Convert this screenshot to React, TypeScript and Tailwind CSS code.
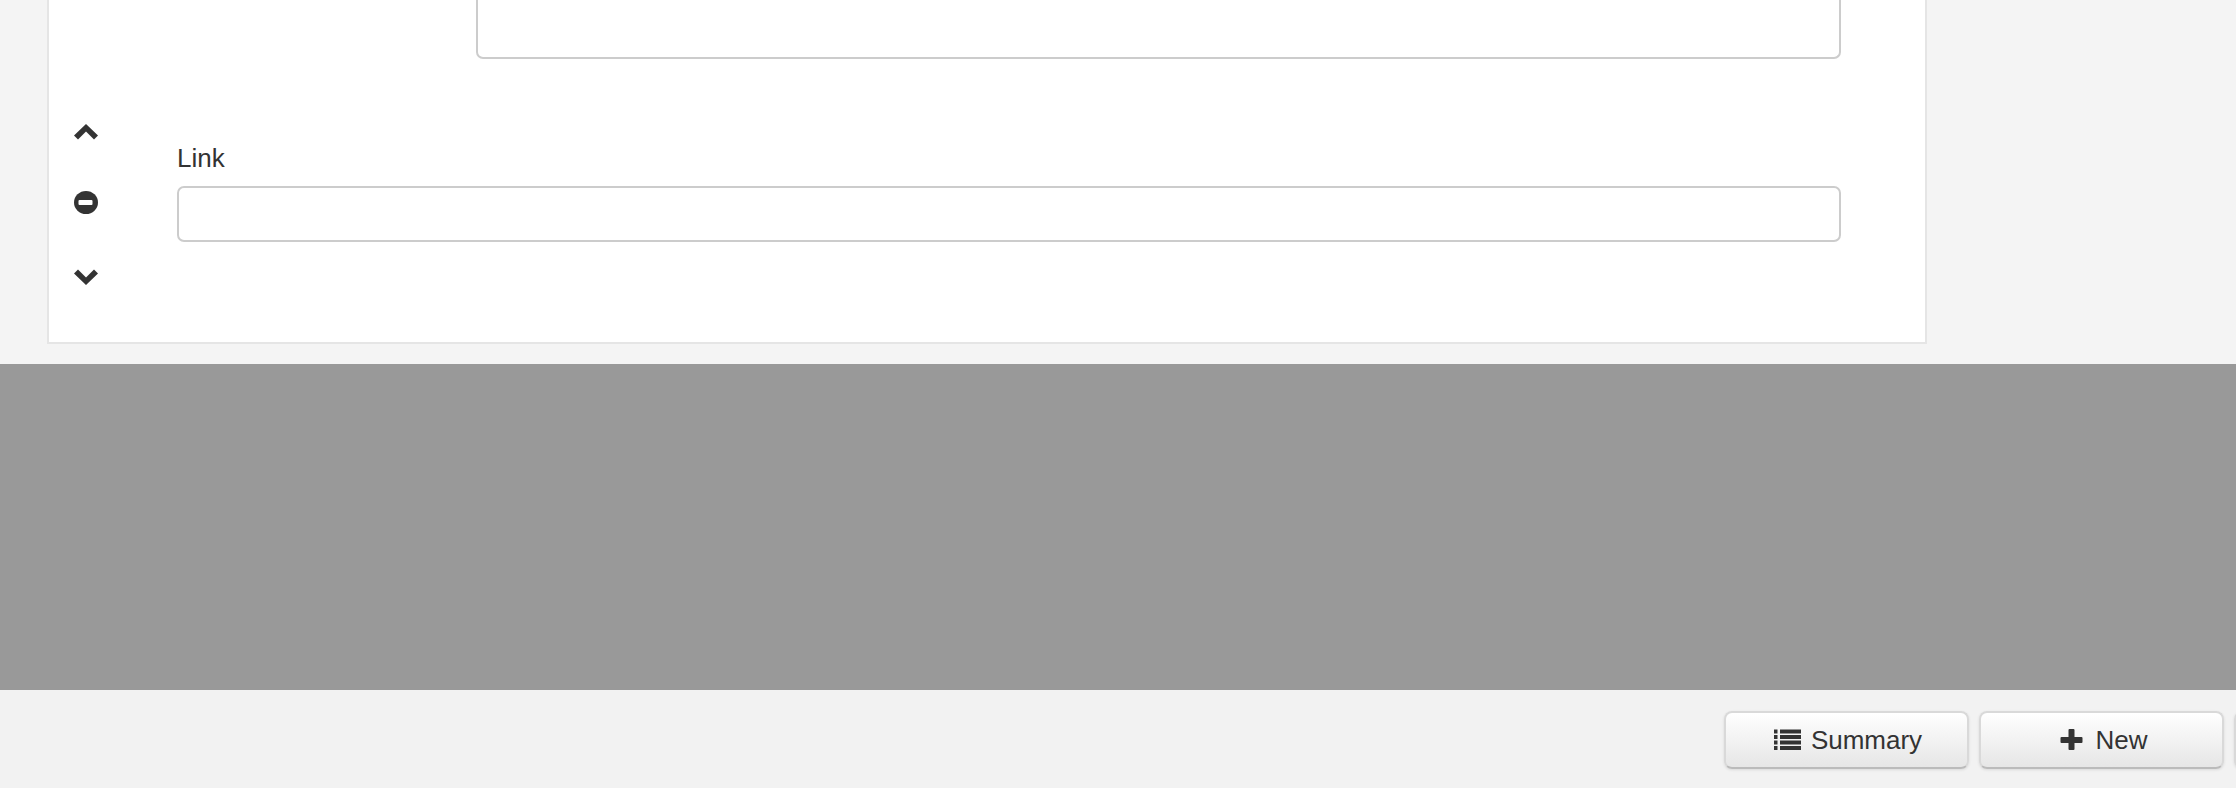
import { ReactNode } from 'react'

function ChevronUp() {
  return (
    <svg width="24" height="16" viewBox="0 0 24 16" className="block text-[#333]">
      <path d="M0 11.5 L12 0 L24 11.5 L20 15.5 L12 7.5 L4 15.5 Z" fill="currentColor" />
    </svg>
  )
}

function ChevronDown() {
  return (
    <svg width="24" height="16" viewBox="0 0 24 16" className="block text-[#333]">
      <path d="M0 4.5 L12 16 L24 4.5 L20 .5 L12 8.5 L4 .5 Z" fill="currentColor" />
    </svg>
  )
}

function MinusCircle() {
  return (
    <svg width="24" height="23" viewBox="0 0 24 23" className="block text-[#333]">
      <ellipse cx="12" cy="11.5" rx="12" ry="11.5" fill="currentColor" />
      <rect x="4.5" y="9" width="14" height="5" rx="1" fill="#fff" />
    </svg>
  )
}

function ListIcon() {
  return (
    <svg width="27" height="22" viewBox="0 0 27 22" className="block text-[#333]">
      <g fill="currentColor">
        <rect x="0" y="0.5" width="3.5" height="4" />
        <rect x="6" y="0.5" width="21" height="4" />
        <rect x="0" y="6" width="3.5" height="4" />
        <rect x="6" y="6" width="21" height="4" />
        <rect x="0" y="11.5" width="3.5" height="4" />
        <rect x="6" y="11.5" width="21" height="4" />
        <rect x="0" y="17" width="3.5" height="4" />
        <rect x="6" y="17" width="21" height="4" />
      </g>
    </svg>
  )
}

function PlusIcon() {
  return (
    <svg width="27" height="22" viewBox="0 0 27 22" className="block text-[#333]">
      <path
        d="M10.5 1 Q10.5 0 11.5 0 H15.5 Q16.5 0 16.5 1 V8 H23.5 Q24.5 8 24.5 9 V13 Q24.5 14 23.5 14 H16.5 V20 Q16.5 21 15.5 21 H11.5 Q10.5 21 10.5 20 V14 H3.5 Q2.5 14 2.5 13 V9 Q2.5 8 3.5 8 H10.5 Z"
        fill="currentColor"
      />
    </svg>
  )
}

function ToolbarButton({ icon, label }: { icon?: ReactNode; label?: string }) {
  return (
    <button className="flex h-[58px] w-[245px] flex-none items-center justify-center gap-[10px] rounded-[8px] border-2 border-[#d9d9d9] border-b-[#bbbbbb] bg-gradient-to-b from-white to-[#e6e6e6] pl-[3px] text-[26px] text-[#333] shadow-[0_1px_3px_rgba(0,0,0,0.1)]">
      {icon}
      {label && <span>{label}</span>}
    </button>
  )
}

export default function App() {
  return (
    <div className="flex h-[788px] w-[2236px] flex-col overflow-hidden bg-[#f2f2f2] font-['Liberation_Sans',Arial,sans-serif]">
      <div className="h-[364px] flex-none bg-[#f4f4f4] pl-[47px]">
        <div className="h-[344px] w-[1880px] border-2 border-t-0 border-[#e5e5e5] bg-white">
          <div className="ml-[427px] h-[59px] w-[1365px] rounded-b-[7px] border-2 border-t-0 border-[#cccccc] bg-white" />

          <div className="mt-[65px] flex">
            <div className="flex w-[128px] flex-none flex-col pl-[25px]">
              <ChevronUp />
              <div className="mt-[51px]">
                <MinusCircle />
              </div>
              <div className="mt-[55px]">
                <ChevronDown />
              </div>
            </div>
            <div className="pt-[16px]">
              <label className="block h-[46px] text-[26px] leading-[36px] text-[#333]">Link</label>
              <input
                type="text"
                className="block h-[56px] w-[1664px] rounded-[7px] border-2 border-[#cccccc] bg-white outline-none"
              />
            </div>
          </div>
        </div>
      </div>

      <div className="h-[326px] flex-none bg-[#999999]" />

      <div className="flex flex-1 gap-[10px] pl-[1724px] pt-[21px]">
        <ToolbarButton icon={<ListIcon />} label="Summary" />
        <ToolbarButton icon={<PlusIcon />} label="New" />
        <ToolbarButton />
      </div>
    </div>
  )
}
